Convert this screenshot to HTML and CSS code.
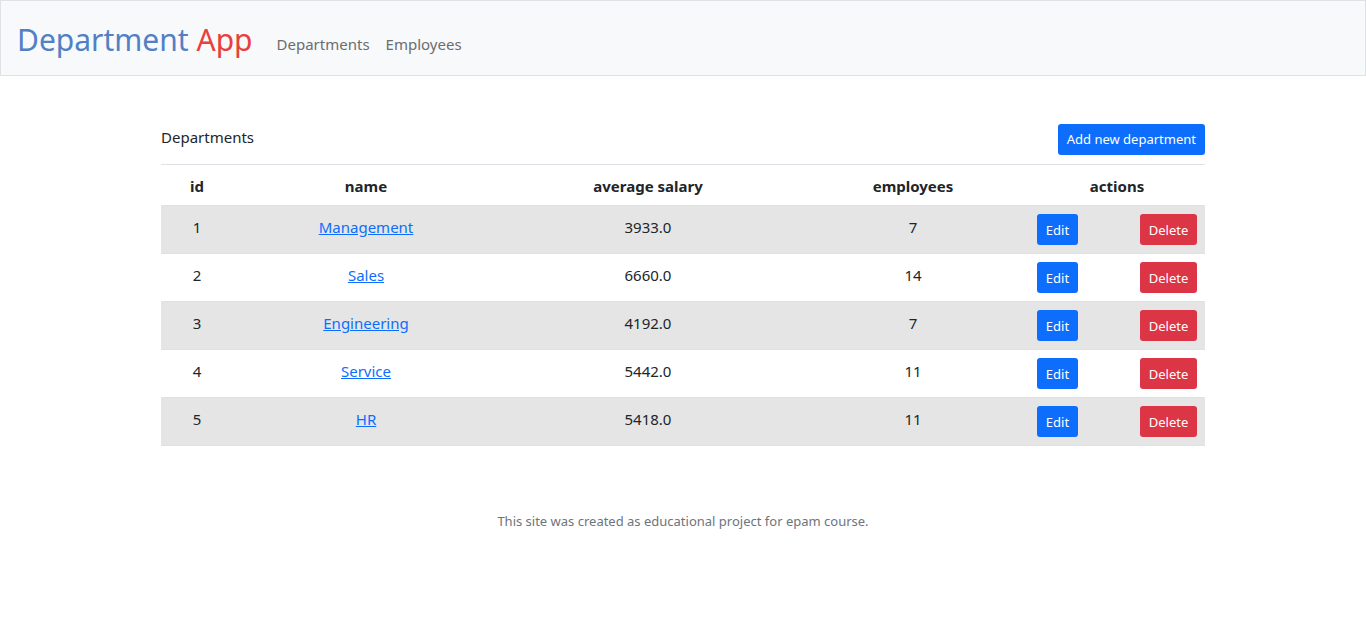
FILE: index.html
```html
<!DOCTYPE html>
<html lang="en">
<head>
<meta charset="utf-8">
<title>Department App</title>
<link rel="stylesheet" href="styles.css">
</head>
<body>
<nav class="navbar">
  <a class="brand" href="#"><span class="brand-main">Department</span> <span class="brand-app">App</span></a>
  <ul class="nav">
    <li><a class="nav-link" href="#">Departments</a></li>
    <li><a class="nav-link" href="#">Employees</a></li>
  </ul>
</nav>
<main class="content">
  <div class="head">
    <span class="title">Departments</span>
    <a class="btn btn-primary btn-sm btn-add" href="#">Add new department</a>
  </div>
  <table class="table">
    <colgroup>
      <col class="c-id"><col class="c-name"><col class="c-sal"><col class="c-emp"><col class="c-act">
    </colgroup>
    <thead>
      <tr><th>id</th><th>name</th><th>average salary</th><th>employees</th><th>actions</th></tr>
    </thead>
    <tbody>
      <tr class="odd"><td>1</td><td><a href="#">Management</a></td><td>3933.0</td><td>7</td><td><div class="actions"><a class="btn btn-primary btn-sm" href="#">Edit</a><a class="btn btn-danger btn-sm" href="#">Delete</a></div></td></tr>
      <tr><td>2</td><td><a href="#">Sales</a></td><td>6660.0</td><td>14</td><td><div class="actions"><a class="btn btn-primary btn-sm" href="#">Edit</a><a class="btn btn-danger btn-sm" href="#">Delete</a></div></td></tr>
      <tr class="odd"><td>3</td><td><a href="#">Engineering</a></td><td>4192.0</td><td>7</td><td><div class="actions"><a class="btn btn-primary btn-sm" href="#">Edit</a><a class="btn btn-danger btn-sm" href="#">Delete</a></div></td></tr>
      <tr><td>4</td><td><a href="#">Service</a></td><td>5442.0</td><td>11</td><td><div class="actions"><a class="btn btn-primary btn-sm" href="#">Edit</a><a class="btn btn-danger btn-sm" href="#">Delete</a></div></td></tr>
      <tr class="odd"><td>5</td><td><a href="#">HR</a></td><td>5418.0</td><td>11</td><td><div class="actions"><a class="btn btn-primary btn-sm" href="#">Edit</a><a class="btn btn-danger btn-sm" href="#">Delete</a></div></td></tr>
    </tbody>
  </table>
</main>
<footer class="footer">This site was created as educational project for epam course.</footer>
</body>
</html>
```
FILE: styles.css
```css
* { box-sizing: border-box; }
html, body { margin: 0; padding: 0; }
body {
  font-family: "Noto Sans", "Open Sans", Arial, sans-serif;
  font-size: 15px;
  line-height: 24px;
  color: #212529;
  background: #fff;
}
.navbar {
  display: flex;
  align-items: center;
  background: #f8f9fa;
  border: 1px solid #dee2e6;
  padding: 8px 16px;
  height: 76px;
}
.brand {
  text-decoration: none;
  font-size: 30px;
  line-height: 58px;
  padding-top: 4px;
  margin-right: 16px;
  white-space: nowrap;
}
.brand-main { color: #5180c4; }
.brand-app { color: #e8403d; }
.nav {
  display: flex;
  list-style: none;
  margin: 0;
  padding: 11px 0 0;
}
.nav-link {
  display: block;
  padding: 8px;
  color: #6b6d70;
  text-decoration: none;
  font-size: 15px;
}
.content {
  width: 1044px;
  margin: 48px auto 0;
}
.head {
  display: flex;
  justify-content: space-between;
  align-items: flex-start;
  padding-bottom: 9px;
  border-bottom: 1px solid #dee2e6;
}
.title { font-size: 15px; line-height: 24px; padding-top: 1px; }
.btn {
  display: inline-block;
  text-decoration: none;
  color: #fff;
  border-radius: 3px;
  text-align: center;
}
.btn-sm {
  font-size: 13px;
  line-height: 21px;
  padding: 6px 8px 4px;
  height: 31px;
}
.btn-add { padding: 5px 9px; }
.btn-primary { background: #0d6efd; }
.btn-danger { background: #dc3545; }
.table {
  width: 100%;
  border-collapse: collapse;
  table-layout: fixed;
}
.c-id { width: 72px; }
.c-name { width: 266px; }
.c-sal { width: 298px; }
.c-emp { width: 232px; }
.c-act { width: 176px; }
.table th, .table td {
  padding: 8px;
  text-align: center;
  vertical-align: top;
  border-bottom: 1px solid #dee2e6;
}
.table th { font-weight: bold; padding-top: 9px; padding-bottom: 7px; }
.table td { padding-top: 9px; padding-bottom: 7px; }
.table td:last-child { padding-top: 8px; padding-bottom: 8px; }
.table tr.odd td { background: #e5e5e5; }
.table td a:not(.btn) { color: #0d6efd; text-decoration: underline; }
.actions {
  display: flex;
  justify-content: space-between;
}
.actions .btn { width: 41px; padding-left: 0; padding-right: 0; }
.actions .btn-danger { width: 57px; }
.footer {
  text-align: center;
  font-size: 13px;
  color: #6c757d;
  margin-top: 63px;
}
```
